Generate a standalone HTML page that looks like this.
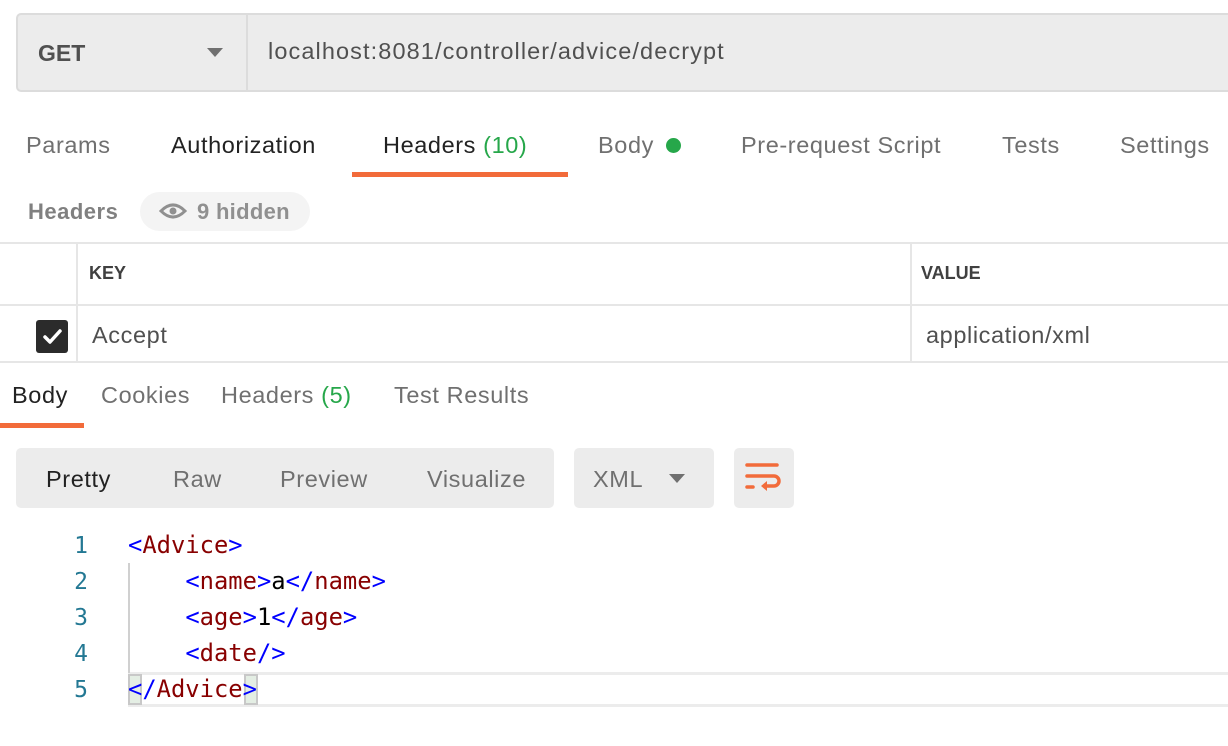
<!DOCTYPE html>
<html><head><meta charset="utf-8"><style>
*{margin:0;padding:0;box-sizing:border-box}
body{width:1228px;height:746px;background:#fff;position:relative;overflow:hidden;font-family:"Liberation Sans",sans-serif;color:#505050}
.a{position:absolute;white-space:nowrap}
.t{font-size:23.5px;line-height:30px;letter-spacing:0.6px}
.g{color:#26a74a}
.code{font-family:"DejaVu Sans Mono","Liberation Mono",monospace;font-size:23.8px;line-height:36px}
.b{color:#0000ff}.r{color:#880000}.k{color:#000}
.ln{color:#237893;font-family:"DejaVu Sans Mono",monospace;font-size:23px;width:40px;text-align:right}
</style></head><body>
<div class="a" style="left:16px;top:13px;width:1230px;height:79px;background:#ececec;border:2px solid #dcdcdc;border-radius:5px"></div>
<div class="a" style="left:246px;top:15px;width:2px;height:75px;background:#dcdcdc"></div>
<div class="a" style="left:38px;top:38px;font-size:23px;font-weight:bold;color:#505050;line-height:30px">GET</div>
<div class="a" style="left:207px;top:48px;width:0;height:0;border-left:8px solid transparent;border-right:8px solid transparent;border-top:9px solid #707070"></div>
<div class="a t" style="left:268px;top:36px;color:#505050;letter-spacing:1.1px">localhost:8081/controller/advice/decrypt</div>

<div class="a t" style="left:26px;top:130px;color:#707070">Params</div>
<div class="a t" style="left:171px;top:130px;color:#222">Authorization</div>
<div class="a t" style="left:383px;top:130px;color:#222">Headers <span class="g">(10)</span></div>
<div class="a" style="left:352px;top:172px;width:216px;height:5px;background:#f26b3a"></div>
<div class="a t" style="left:598px;top:130px;color:#707070">Body</div>
<div class="a" style="left:666px;top:138px;width:15px;height:15px;border-radius:50%;background:#26a74a"></div>
<div class="a t" style="left:741px;top:130px;color:#707070">Pre-request Script</div>
<div class="a t" style="left:1002px;top:130px;color:#707070">Tests</div>
<div class="a t" style="left:1120px;top:130px;color:#707070">Settings</div>

<div class="a" style="left:28px;top:197px;font-size:22px;font-weight:bold;color:#808080;line-height:30px;letter-spacing:0.5px">Headers</div>
<div class="a" style="left:140px;top:192px;width:170px;height:39px;border-radius:20px;background:#f4f4f4"></div>
<svg class="a" style="left:159px;top:201px" width="28" height="20" viewBox="0 0 28 20"><path d="M2 10 Q14 -2 26 10 Q14 22 2 10Z" fill="none" stroke="#909090" stroke-width="3"/><circle cx="14" cy="10" r="3.5" fill="#909090"/></svg>
<div class="a" style="left:197px;top:197px;font-size:22px;font-weight:bold;color:#909090;line-height:30px;letter-spacing:0.3px">9 hidden</div>

<div class="a" style="left:0;top:242px;width:1228px;height:2px;background:#e6e6e6"></div>
<div class="a" style="left:0;top:304px;width:1228px;height:2px;background:#e6e6e6"></div>
<div class="a" style="left:0;top:361px;width:1228px;height:2px;background:#e6e6e6"></div>
<div class="a" style="left:76px;top:244px;width:2px;height:117px;background:#e6e6e6"></div>
<div class="a" style="left:910px;top:244px;width:2px;height:117px;background:#e6e6e6"></div>
<div class="a" style="left:89px;top:263px;font-size:18px;font-weight:bold;color:#404040">KEY</div>
<div class="a" style="left:921px;top:263px;font-size:18px;font-weight:bold;color:#404040">VALUE</div>
<div class="a" style="left:36px;top:320px;width:32px;height:33px;background:#2b2b2b;border-radius:3px"></div>
<svg class="a" style="left:36px;top:320px" width="32" height="33"><path d="M9 17 L14 22 L24 11" fill="none" stroke="#fff" stroke-width="3.5" stroke-linecap="round" stroke-linejoin="round"/></svg>
<div class="a t" style="left:92px;top:320px;color:#505050">Accept</div>
<div class="a t" style="left:926px;top:320px;color:#505050">application/xml</div>

<div class="a t" style="left:12px;top:380px;color:#222">Body</div>
<div class="a" style="left:0;top:423px;width:84px;height:5px;background:#f26b3a"></div>
<div class="a t" style="left:101px;top:380px;color:#707070">Cookies</div>
<div class="a t" style="left:221px;top:380px;color:#707070">Headers <span class="g">(5)</span></div>
<div class="a t" style="left:394px;top:380px;color:#707070">Test Results</div>

<div class="a" style="left:16px;top:448px;width:538px;height:60px;background:#ececec;border-radius:5px"></div>
<div class="a t" style="left:46px;top:464px;color:#222">Pretty</div>
<div class="a t" style="left:173px;top:464px;color:#707070">Raw</div>
<div class="a t" style="left:280px;top:464px;color:#707070">Preview</div>
<div class="a t" style="left:427px;top:464px;color:#707070">Visualize</div>
<div class="a" style="left:574px;top:448px;width:140px;height:60px;background:#ececec;border-radius:5px"></div>
<div class="a t" style="left:593px;top:464px;color:#707070">XML</div>
<div class="a" style="left:669px;top:474px;border-left:8px solid transparent;border-right:8px solid transparent;border-top:9px solid #707070"></div>
<div class="a" style="left:734px;top:448px;width:60px;height:60px;background:#ececec;border-radius:5px"></div>
<svg class="a" style="left:734px;top:448px" width="60" height="60"><g fill="none" stroke="#f26b3a" stroke-width="3.5" stroke-linecap="round"><path d="M13 17H43"/><path d="M13 28H40a5 5 0 0 1 0 10H31"/><path d="M13 39H19"/></g><path d="M33 33 L27 38 L33 43Z" fill="#f26b3a"/></svg>

<div class="a" style="left:128px;top:672px;width:1100px;height:35px;border-top:3px solid #ececec;border-bottom:3px solid #ececec"></div>
<div class="a" style="left:128px;top:563px;width:2px;height:110px;background:#d0d0d0"></div>
<div class="a" style="left:128px;top:674px;width:14px;height:31px;background:#e4eee4;border:2px solid #c8c8c8"></div>
<div class="a" style="left:244px;top:674px;width:14px;height:31px;background:#e4eee4;border:2px solid #c8c8c8"></div>
<div class="a ln" style="left:48px;top:528px;line-height:36px">1<br>2<br>3<br>4<br>5</div>
<div class="a code" style="left:128px;top:527px"><span class="b">&lt;</span><span class="r">Advice</span><span class="b">&gt;</span><br>&nbsp;&nbsp;&nbsp;&nbsp;<span class="b">&lt;</span><span class="r">name</span><span class="b">&gt;</span><span class="k">a</span><span class="b">&lt;/</span><span class="r">name</span><span class="b">&gt;</span><br>&nbsp;&nbsp;&nbsp;&nbsp;<span class="b">&lt;</span><span class="r">age</span><span class="b">&gt;</span><span class="k">1</span><span class="b">&lt;/</span><span class="r">age</span><span class="b">&gt;</span><br>&nbsp;&nbsp;&nbsp;&nbsp;<span class="b">&lt;</span><span class="r">date</span><span class="b">/&gt;</span><br><span class="b">&lt;/</span><span class="r">Advice</span><span class="b">&gt;</span></div>
</body></html>
